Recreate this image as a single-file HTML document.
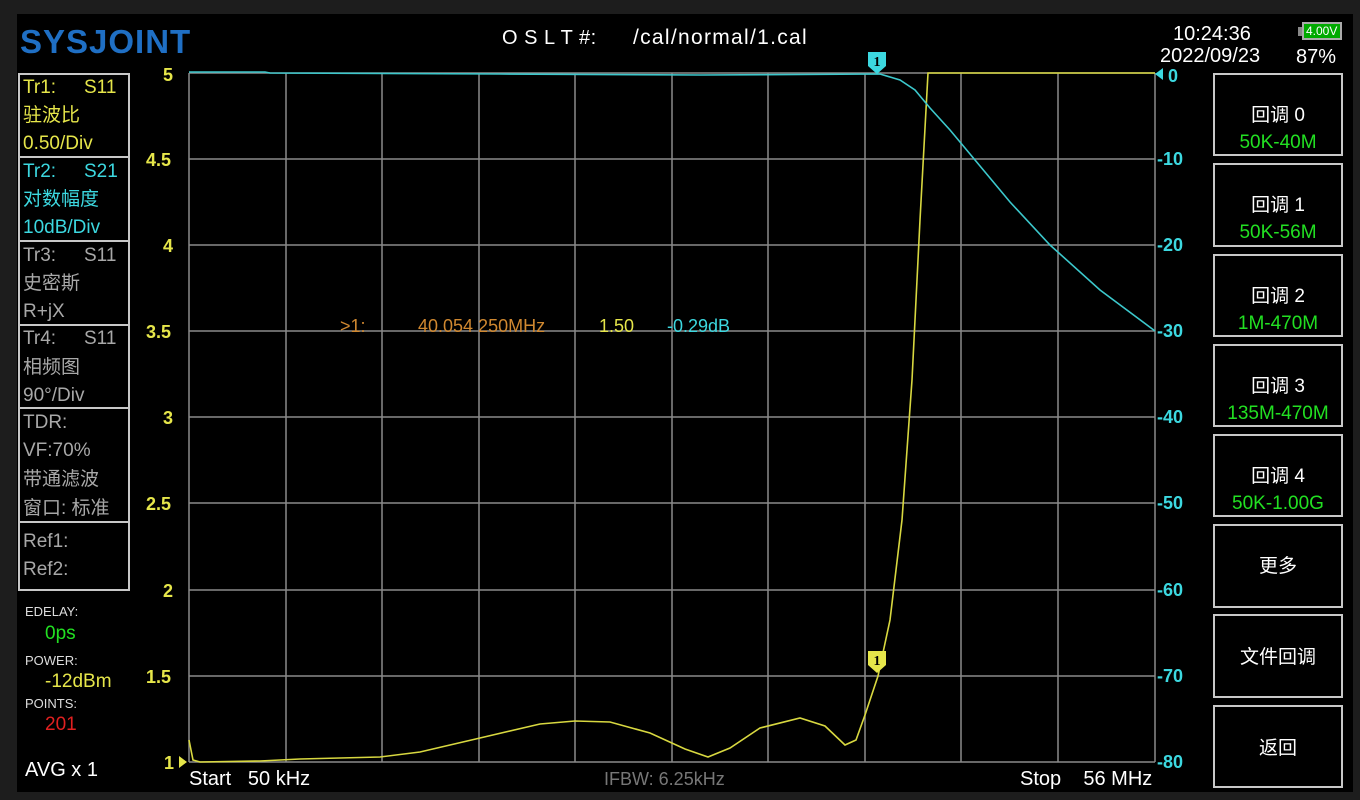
<!DOCTYPE html>
<html><head><meta charset="utf-8"><style>
*{margin:0;padding:0;box-sizing:border-box}
body{width:1360px;height:800px;background:#1d1d1d;position:relative;overflow:hidden;font-family:"Liberation Sans","Noto Sans CJK SC",sans-serif}
#scr{position:absolute;left:17px;top:14px;width:1336px;height:778px;background:#000}
.t{position:absolute;white-space:nowrap;line-height:1}
.box{position:absolute;border:2px solid #c8c8c8}
.btn{position:absolute;left:1213px;width:130px;border:2px solid #c8c8c8;color:#fff;text-align:center;font-size:19px}
.y{color:#e6e64a}.c{color:#3cd8e0}.g{color:#a8a8a8}.w{color:#fff}.gr{color:#22e022}
.ax{font-size:18px;font-weight:bold}
.lb{font-size:19px}
</style></head><body>
<div id="scr"></div>
<div class="t" style="left:20px;top:25px;font-size:33px;font-weight:bold;color:#1f6fc4;letter-spacing:1px">SYSJOINT</div>
<div class="t w" style="left:502px;top:28px;font-size:20px;letter-spacing:0.5px">O S L T #:</div>
<div class="t w" style="left:633px;top:27px;font-size:21px;letter-spacing:1.3px">/cal/normal/1.cal</div>
<div class="t w" style="left:1173px;top:24px;font-size:20px">10:24:36</div>
<div class="t w" style="left:1160px;top:46px;font-size:20px">2022/09/23</div>
<div class="t w" style="left:1296px;top:47px;font-size:20px">87%</div>
<div style="position:absolute;left:1302px;top:22px;width:40px;height:18px;border:2px solid #aaa;background:#0a0"><span class="t" style="left:2px;top:1px;font-size:12px;color:#fff">4.00V</span></div>
<div style="position:absolute;left:1298px;top:27px;width:4px;height:9px;background:#888"></div>

<div class="box" style="left:18px;top:73px;width:112px;height:518px"></div>
<div style="position:absolute;left:18px;top:156px;width:112px;height:2px;background:#c8c8c8"></div>
<div style="position:absolute;left:18px;top:240px;width:112px;height:2px;background:#c8c8c8"></div>
<div style="position:absolute;left:18px;top:324px;width:112px;height:2px;background:#c8c8c8"></div>
<div style="position:absolute;left:18px;top:407px;width:112px;height:2px;background:#c8c8c8"></div>
<div style="position:absolute;left:18px;top:521px;width:112px;height:2px;background:#c8c8c8"></div>
<div class="t y lb" style="left:23px;top:78px">Tr1:</div><div class="t y lb" style="left:84px;top:78px">S11</div>
<div class="t y lb" style="left:23px;top:106px">驻波比</div>
<div class="t y lb" style="left:23px;top:134px">0.50/Div</div>
<div class="t c lb" style="left:23px;top:162px">Tr2:</div><div class="t c lb" style="left:84px;top:162px">S21</div>
<div class="t c lb" style="left:23px;top:190px">对数幅度</div>
<div class="t c lb" style="left:23px;top:218px">10dB/Div</div>
<div class="t g lb" style="left:23px;top:246px">Tr3:</div><div class="t g lb" style="left:84px;top:246px">S11</div>
<div class="t g lb" style="left:23px;top:274px">史密斯</div>
<div class="t g lb" style="left:23px;top:302px">R+jX</div>
<div class="t g lb" style="left:23px;top:329px">Tr4:</div><div class="t g lb" style="left:84px;top:329px">S11</div>
<div class="t g lb" style="left:23px;top:358px">相频图</div>
<div class="t g lb" style="left:23px;top:386px">90°/Div</div>
<div class="t g lb" style="left:23px;top:413px">TDR:</div>
<div class="t g lb" style="left:23px;top:441px">VF:70%</div>
<div class="t g lb" style="left:23px;top:470px">带通滤波</div>
<div class="t g lb" style="left:23px;top:499px">窗口: 标准</div>
<div class="t g lb" style="left:23px;top:532px">Ref1:</div>
<div class="t g lb" style="left:23px;top:560px">Ref2:</div>

<div class="t" style="left:25px;top:605px;font-size:13px;color:#ddd">EDELAY:</div>
<div class="t gr" style="left:45px;top:624px;font-size:19px">0ps</div>
<div class="t" style="left:25px;top:654px;font-size:13px;color:#ddd">POWER:</div>
<div class="t y" style="left:45px;top:672px;font-size:19px">-12dBm</div>
<div class="t" style="left:25px;top:697px;font-size:13px;color:#ddd">POINTS:</div>
<div class="t" style="left:45px;top:715px;font-size:19px;color:#e02020">201</div>
<div class="t w" style="left:25px;top:760px;font-size:20px">AVG x 1</div>

<div class="t y ax" style="left:163px;top:66px">5</div>
<div class="t y ax" style="left:146px;top:151px">4.5</div>
<div class="t y ax" style="left:163px;top:237px">4</div>
<div class="t y ax" style="left:146px;top:323px">3.5</div>
<div class="t y ax" style="left:163px;top:409px">3</div>
<div class="t y ax" style="left:146px;top:495px">2.5</div>
<div class="t y ax" style="left:163px;top:582px">2</div>
<div class="t y ax" style="left:146px;top:668px">1.5</div>
<div class="t y ax" style="left:164px;top:754px">1</div>

<div class="t c ax" style="left:1168px;top:67px">0</div>
<div class="t c ax" style="left:1157px;top:150px">-10</div>
<div class="t c ax" style="left:1157px;top:236px">-20</div>
<div class="t c ax" style="left:1157px;top:322px">-30</div>
<div class="t c ax" style="left:1157px;top:408px">-40</div>
<div class="t c ax" style="left:1157px;top:494px">-50</div>
<div class="t c ax" style="left:1157px;top:581px">-60</div>
<div class="t c ax" style="left:1157px;top:667px">-70</div>
<div class="t c ax" style="left:1157px;top:753px">-80</div>

<svg style="position:absolute;left:0;top:0" width="1360" height="800">
<g stroke="#8a8a8a" stroke-width="1.5" fill="none">
<path d="M189 73V762M286 73V762M382 73V762M479 73V762M575 73V762M672 73V762M768 73V762M865 73V762M961 73V762M1058 73V762M1155 73V762"/>
<path d="M189 73H1155M189 159H1155M189 245H1155M189 331H1155M189 417H1155M189 503H1155M189 590H1155M189 676H1155M189 762H1155"/>
</g>
<path fill="none" stroke="#d8d840" stroke-width="1.6" d="M189 740L193 760L200 762L260 761L300 759L380 757L420 752L480 738L540 724L575 721L610 722L650 733L685 749L708 757L730 748L760 728L800 718L825 726L845 745L856 740L865 715L878 676L890 620L902 520L912 380L920 220L928 73L1155 73"/>
<path fill="none" stroke="#3cc8cc" stroke-width="1.6" d="M189 72L265 72L270 73L500 74L700 75L880 74L900 80L915 90L930 108L950 130L980 166L1010 202L1050 245L1100 290L1155 331"/>
<path d="M868 52h18v14l-9 8l-9-8z" fill="#3cd8e0"/><text x="877" y="66" font-size="14" font-weight="bold" text-anchor="middle" fill="#000" font-family="Liberation Serif">1</text>
<path d="M868 651h18v14l-9 8l-9-8z" fill="#e6e64a"/><text x="877" y="665" font-size="14" font-weight="bold" text-anchor="middle" fill="#000" font-family="Liberation Serif">1</text>
<path d="M1155 74l8-6v12z" fill="#3cd8e0"/>
<path d="M187 762l-8-6v12z" fill="#e6e64a"/>
</svg>

<div class="t" style="left:340px;top:317px;font-size:18px;color:#d08830">&gt;1:</div>
<div class="t" style="left:418px;top:317px;font-size:18px;color:#d08830">40.054 250MHz</div>
<div class="t y" style="left:599px;top:317px;font-size:18px">1.50</div>
<div class="t c" style="left:667px;top:317px;font-size:18px">-0.29dB</div>

<div class="t w" style="left:189px;top:769px;font-size:20px">Start&nbsp;&nbsp;&nbsp;50 kHz</div>
<div class="t" style="left:604px;top:770px;font-size:18px;color:#777">IFBW: 6.25kHz</div>
<div class="t w" style="left:1020px;top:769px;font-size:20px">Stop&nbsp;&nbsp;&nbsp;&nbsp;56 MHz</div>

<div class="btn" style="top:73px;height:83px"><div style="margin-top:25px">回调 0</div><div class="gr" style="margin-top:5px">50K-40M</div></div>
<div class="btn" style="top:163px;height:84px"><div style="margin-top:25px">回调 1</div><div class="gr" style="margin-top:5px">50K-56M</div></div>
<div class="btn" style="top:254px;height:83px"><div style="margin-top:25px">回调 2</div><div class="gr" style="margin-top:5px">1M-470M</div></div>
<div class="btn" style="top:344px;height:83px"><div style="margin-top:25px">回调 3</div><div class="gr" style="margin-top:5px">135M-470M</div></div>
<div class="btn" style="top:434px;height:83px"><div style="margin-top:25px">回调 4</div><div class="gr" style="margin-top:5px">50K-1.00G</div></div>
<div class="btn" style="top:524px;height:84px"><div style="margin-top:25px">更多</div></div>
<div class="btn" style="top:614px;height:84px"><div style="margin-top:26px">文件回调</div></div>
<div class="btn" style="top:705px;height:83px"><div style="margin-top:26px">返回</div></div>
</body></html>
